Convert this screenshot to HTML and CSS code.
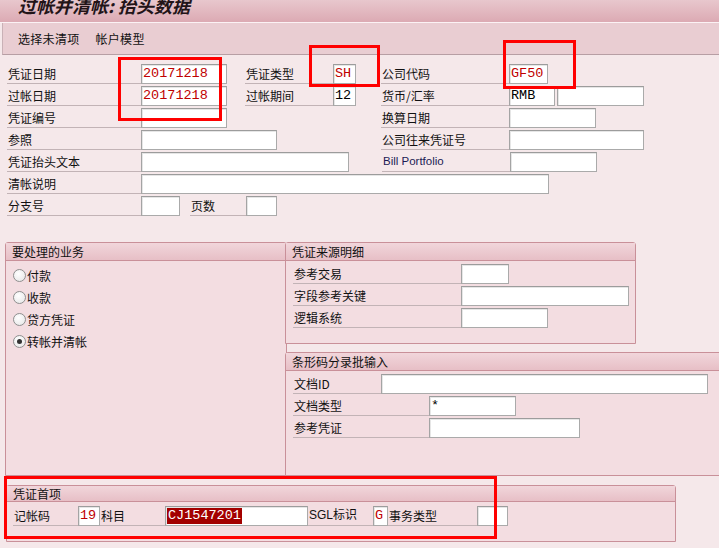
FILE: index.html
```html
<!DOCTYPE html>
<html lang="zh">
<head>
<meta charset="utf-8">
<title>过帐并清帐: 抬头数据</title>
<link rel="stylesheet" href="styles.css">
</head>
<body>
<div class="screen">
  <div class="titlebar"><span class="title">过帐并清帐: 抬头数据</span></div>
  <div class="toolbar">
    <span class="tb-item">选择未清项</span>
    <span class="tb-item">帐户模型</span>
  </div>

  <div class="form">
    <div class="row">
      <span class="lbl w134">凭证日期</span><span class="inp w86 red">20171218</span>
      <span class="gap18"></span>
      <span class="lbl w88">凭证类型</span><span class="inp w23 red">SH</span>
      <span class="gap25"></span>
      <span class="lbl w128">公司代码</span><span class="inp w39 red">GF50</span>
    </div>
    <div class="row">
      <span class="lbl w134">过帐日期</span><span class="inp w86 red">20171218</span>
      <span class="gap18"></span>
      <span class="lbl w88">过帐期间</span><span class="inp w23">12</span>
      <span class="gap25"></span>
      <span class="lbl w128">货币/汇率</span><span class="inp w46">RMB</span><span class="inp w87 ml2"></span>
    </div>
    <div class="row">
      <span class="lbl w134">凭证编号</span><span class="inp w86"></span>
      <span class="gap154"></span>
      <span class="lbl w128">换算日期</span><span class="inp w87"></span>
    </div>
    <div class="row">
      <span class="lbl w134">参照</span><span class="inp w136"></span>
      <span class="gap104"></span>
      <span class="lbl w128">公司往来凭证号</span><span class="inp w135"></span>
    </div>
    <div class="row">
      <span class="lbl w134">凭证抬头文本</span><span class="inp w208"></span>
      <span class="gap32"></span>
      <span class="lbl w128 latin">Bill Portfolio</span><span class="inp w87"></span>
    </div>
    <div class="row">
      <span class="lbl w134">清帐说明</span><span class="inp w408"></span>
    </div>
    <div class="row">
      <span class="lbl w134">分支号</span><span class="inp w39"></span>
      <span class="gap10"></span>
      <span class="lbl w56">页数</span><span class="inp w31"></span>
    </div>
  </div>

  <div class="groups">
    <div class="group g-left">
      <div class="ghead">要处理的业务</div>
      <div class="gbody radios">
        <div class="radio"><span class="circle"></span>付款</div>
        <div class="radio"><span class="circle"></span>收款</div>
        <div class="radio"><span class="circle"></span>贷方凭证</div>
        <div class="radio"><span class="circle on"></span>转帐并清帐</div>
      </div>
    </div>
    <div class="gcol">
      <div class="group g-src">
        <div class="ghead">凭证来源明细</div>
        <div class="gbody">
          <div class="row"><span class="lbl w168">参考交易</span><span class="inp w48"></span></div>
          <div class="row"><span class="lbl w168">字段参考关键</span><span class="inp w168"></span></div>
          <div class="row"><span class="lbl w168">逻辑系统</span><span class="inp w87"></span></div>
        </div>
      </div>
      <div class="group g-bar">
        <div class="ghead">条形码分录批输入</div>
        <div class="gbody">
          <div class="row"><span class="lbl w88">文档ID</span><span class="inp w327"></span></div>
          <div class="row"><span class="lbl w136">文档类型</span><span class="inp w87">*</span></div>
          <div class="row"><span class="lbl w136">参考凭证</span><span class="inp w151"></span></div>
        </div>
      </div>
    </div>
  </div>

  <div class="group g-item">
    <div class="ghead">凭证首项</div>
    <div class="gbody">
      <div class="row">
        <span class="lbl w65">记帐码</span><span class="inp w22 red">19</span>
        <span class="lbl w65">科目</span><span class="inp w143"><span class="sel">CJ1547201</span></span>
        <span class="lbl w65 mix">SGL标识</span><span class="inp w15 red">G</span>
        <span class="lbl w89">事务类型</span><span class="inp w31"></span>
      </div>
    </div>
  </div>

  <div class="mark m1"></div>
  <div class="mark m2"></div>
  <div class="mark m3"></div>
  <div class="mark m4"></div>
</div>
</body>
</html>
```

FILE: styles.css
```css
* { box-sizing: border-box; }
html, body { margin: 0; padding: 0; }
body {
  background: #f5e8ea;
  font-family: "Noto Sans CJK SC", "Liberation Sans", sans-serif;
  font-size: 12px;
  color: #111;
}
.screen {
  position: relative;
  width: 719px;
  height: 548px;
  overflow: hidden;
  background: #f5e8ea;
}
.titlebar {
  height: 23px;
  background: linear-gradient(#e8c7cd, #dcaab3);
  border-bottom: 1px solid #fbf2f4;
  overflow: hidden;
  padding-left: 18px;
}
.title {
  display: block;
  font-size: 18px;
  line-height: 14px;
  font-weight: bold;
  font-style: italic;
  color: #221418;
  margin-top: -2px;
}
.toolbar {
  height: 32px;
  margin-left: 2px;
  background: #e9cdd2;
  border-left: 1px solid #c9b1b6;
  border-bottom: 1px solid #b79ea4;
  display: flex;
  align-items: center;
  padding-left: 15px;
  gap: 16px;
}
.tb-item { font-size: 12px; line-height: 16px; color: #111; letter-spacing: 0.3px; }

.form { padding: 9px 0 0 7px; }
.row { display: flex; height: 22px; align-items: flex-start; }
.lbl {
  height: 20px;
  line-height: 19px;
  border-bottom: 1px solid #c2b3b6;
  white-space: nowrap;
  flex: none;
  padding-left: 1px;
}
.latin { font-family: "Liberation Sans", sans-serif; font-size: 11.5px; color: #1c1c55; }
.mix { font-family: "Liberation Sans", "Noto Sans CJK SC", sans-serif; }
.inp {
  flex: none;
  height: 20px;
  background: #fff;
  border: 1px solid #aaa;
  border-top-color: #9c9c9c;
  border-left-color: #a4a4a4;
  box-shadow: inset 1px 1px 0 #e6e6e6;
  font-family: "Liberation Mono", monospace;
  font-size: 13.5px;
  line-height: 18px;
  padding-left: 1px;
  color: #000;
  white-space: nowrap;
  overflow: hidden;
}
.red { color: #c00000; }
.sel { background: #a30000; color: #fff; padding: 0 1px; display: inline-block; line-height: 16px; margin-top: 1px; }
.ml2 { margin-left: 2px; }

.w15 { width: 15px; } .w22 { width: 22px; } .w23 { width: 23px; } .w31 { width: 31px; }
.w39 { width: 39px; } .w46 { width: 46px; } .w48 { width: 48px; } .w56 { width: 56px; }
.w65 { width: 65px; } .w86 { width: 86px; } .w87 { width: 87px; }
.w88 { width: 88px; } .w89 { width: 89px; } .w128 { width: 128px; } .w134 { width: 134px; } .w135 { width: 135px; }
.w136 { width: 136px; } .w143 { width: 143px; } .w151 { width: 151px; } .w168 { width: 168px; }
.w208 { width: 208px; } .w327 { width: 327px; } .w408 { width: 408px; }
.gap10 { width: 10px; flex: none; } .gap18 { width: 18px; flex: none; } .gap25 { width: 25px; flex: none; }
.gap32 { width: 33px; flex: none; } .gap104 { width: 104px; flex: none; } .gap154 { width: 154px; flex: none; }

.groups {
  display: flex;
  margin-top: 24px;
  padding-left: 5px;
  height: 234px;
}
.group {
  flex: none;
  border: 1px solid #c99099;
  border-radius: 3px 3px 0 0;
  background: #f3dde1;
}
.ghead {
  height: 18px;
  line-height: 17px;
  padding-left: 6px;
  background: linear-gradient(#f1d6db, #e7bfc6);
  border-bottom: 1px solid #c99099;
  color: #111;
}
.g-left { width: 282px; height: 234px; }
.radios { padding-top: 3px; padding-left: 8px; }
.radio { display: flex; align-items: center; height: 22px; gap: 1px; }
.circle {
  flex: none;
  width: 13px; height: 13px;
  border-radius: 50%;
  border: 1px solid #8f8f8f;
  background: radial-gradient(circle at 40% 35%, #ffffff, #e4e4e4);
  position: relative;
}
.circle.on::after {
  content: "";
  position: absolute;
  left: 3px; top: 3px;
  width: 5px; height: 5px;
  border-radius: 50%;
  background: #333;
}
.gcol { flex: none; display: flex; flex-direction: column; margin-left: -2px; gap: 8px; }
.g-src { width: 351px; height: 102px; }
.g-bar { width: 440px; height: 124px; }
.gbody { padding: 3px 0 0 7px; }

.g-item {
  margin: 9px 0 0 6px;
  width: 670px;
  height: 57px;
}
.g-item .ghead { height: 16px; line-height: 15px; }
.g-item .gbody { padding: 4px 0 0 6px; }

.mark { position: absolute; border: 3px solid #ff0000; }
.m1 { left: 118px; top: 57px; width: 104px; height: 64px; }
.m2 { left: 309px; top: 45px; width: 71px; height: 42px; }
.m3 { left: 503px; top: 40px; width: 73px; height: 49px; }
.m4 { left: 4px; top: 476px; width: 493px; height: 63px; }
```
